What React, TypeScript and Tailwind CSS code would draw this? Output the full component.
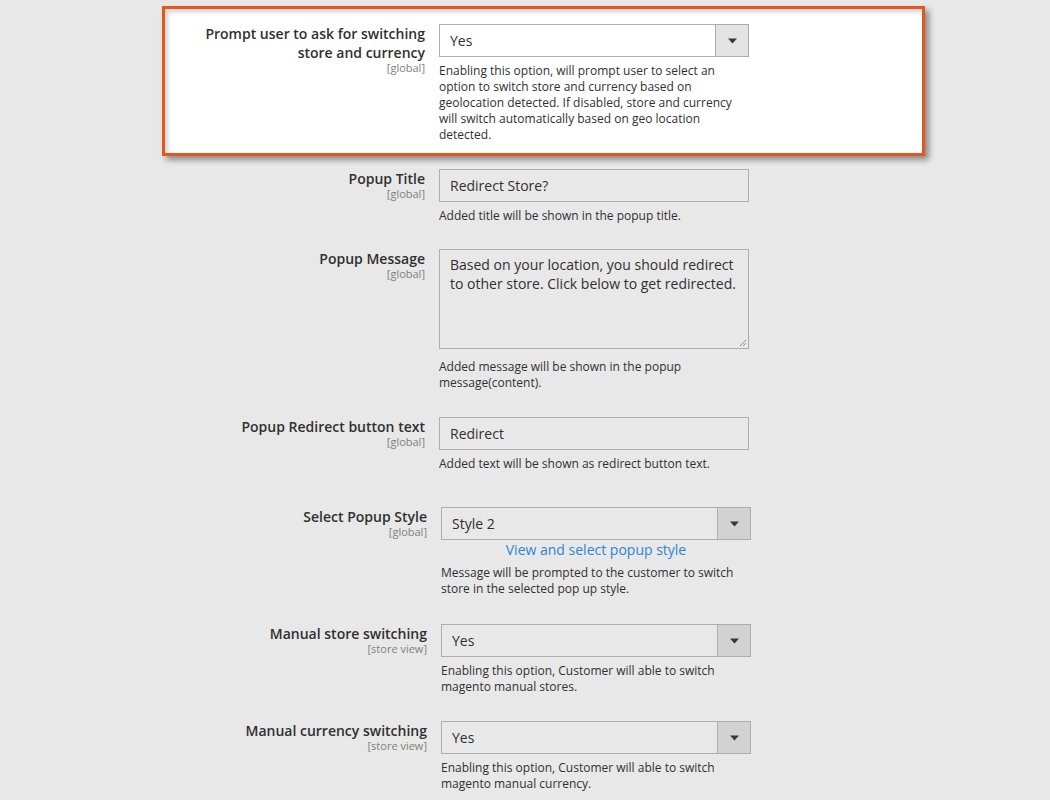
import React from "react";

const font = { fontFamily: '"Open Sans", "Noto Sans", sans-serif' };

function Arrow() {
  return (
    <svg width="9" height="6" viewBox="0 0 9 6" className="block">
      <path d="M0 0.5 L9 0.5 L4.5 5.5 Z" fill="#41362f" />
    </svg>
  );
}

function Select({ value, white }: { value: string; white?: boolean }) {
  return (
    <div
      className={`flex h-[33px] w-[310px] border border-[#adadad] ${white ? "bg-white" : "bg-[#e8e8e8]"}`}
    >
      <div className="flex flex-1 items-center pl-[10px] text-[14px] text-[#303030]">{value}</div>
      <div
        className={`flex w-[33px] items-center justify-center border-l border-[#adadad] ${white ? "bg-[#e3e3e3]" : "bg-[#d2d2d2]"}`}
      >
        <Arrow />
      </div>
    </div>
  );
}

function Input({ value }: { value: string }) {
  return (
    <div className="flex h-[33px] w-[310px] items-center border border-[#adadad] bg-[#e8e8e8] pl-[10px] text-[14px] text-[#303030]">
      {value}
    </div>
  );
}

function Label({ title, scope, width }: { title: React.ReactNode; scope: string; width: string }) {
  return (
    <div className={`${width} flex shrink-0 flex-col items-end text-right`}>
      <div className="text-[14px] font-semibold leading-[19px] text-[#303030]">{title}</div>
      <div className="text-[11px] leading-[12px] text-[#808080]">{scope}</div>
    </div>
  );
}

function Note({ children, mt = "mt-[6px]" }: { children: React.ReactNode; mt?: string }) {
  return <div className={`${mt} w-[300px] text-[12px] leading-[16px] text-[#303030]`}>{children}</div>;
}

export default function App() {
  return (
    <div className="min-h-[800px] w-[1050px] bg-[#e8e8e8] pt-[6px]" style={font}>
      <div className="ml-[162px] w-[763px]">
        {/* Highlighted card */}
        <div className="border-[3px] border-[#e4571b] bg-white pt-[15px] pb-[10px] shadow-[4px_4px_6px_rgba(0,0,0,0.4),inset_3px_3px_4px_rgba(0,0,0,0.18)]">
          <div className="flex gap-[14px]">
            <Label
              width="w-[260px]"
              title={
                <>
                  Prompt user to ask for switching
                  <br />
                  store and currency
                </>
              }
              scope="[global]"
            />
            <div>
              <Select value="Yes" white />
              <Note>
                Enabling this option, will prompt user to select an option to switch store and currency based on
                geolocation detected. If disabled, store and currency will switch automatically based on geo location
                detected.
              </Note>
            </div>
          </div>
        </div>

        <div className="px-[3px]">
          {/* Popup Title */}
          <div className="mt-[13px] flex gap-[14px]">
            <Label width="w-[260px]" title="Popup Title" scope="[global]" />
            <div>
              <Input value="Redirect Store?" />
              <Note>Added title will be shown in the popup title.</Note>
            </div>
          </div>

          {/* Popup Message */}
          <div className="mt-[25px] flex gap-[14px]">
            <Label width="w-[260px]" title="Popup Message" scope="[global]" />
            <div>
              <div className="relative h-[100px] w-[310px] border border-[#adadad] bg-[#e8e8e8] px-[10px] pt-[5px] text-[14px] leading-[19px] text-[#303030]">
                Based on your location, you should redirect to other store. Click below to get redirected.
                <svg width="8" height="8" viewBox="0 0 8 8" className="absolute right-[1px] bottom-[1px]">
                  <path d="M7 1 L1 7 M7 4 L4 7" stroke="#909090" strokeWidth="1" />
                </svg>
              </div>
              <Note mt="mt-[10px]">Added message will be shown in the popup message(content).</Note>
            </div>
          </div>

          {/* Popup Redirect button text */}
          <div className="mt-[26px] flex gap-[14px]">
            <Label width="w-[260px]" title="Popup Redirect button text" scope="[global]" />
            <div>
              <Input value="Redirect" />
              <Note>Added text will be shown as redirect button text.</Note>
            </div>
          </div>

          {/* Select Popup Style */}
          <div className="mt-[35px] flex gap-[14px]">
            <Label width="w-[262px]" title="Select Popup Style" scope="[global]" />
            <div>
              <Select value="Style 2" />
              <div className="w-[310px] text-center text-[14px] leading-[19px] text-[#2e84d6]">
                View and select popup style
              </div>
              <Note>Message will be prompted to the customer to switch store in the selected pop up style.</Note>
            </div>
          </div>

          {/* Manual store switching */}
          <div className="mt-[27px] flex gap-[14px]">
            <Label width="w-[262px]" title="Manual store switching" scope="[store view]" />
            <div>
              <Select value="Yes" />
              <Note>Enabling this option, Customer will able to switch magento manual stores.</Note>
            </div>
          </div>

          {/* Manual currency switching */}
          <div className="mt-[26px] flex gap-[14px]">
            <Label width="w-[262px]" title="Manual currency switching" scope="[store view]" />
            <div>
              <Select value="Yes" />
              <Note>Enabling this option, Customer will able to switch magento manual currency.</Note>
            </div>
          </div>
        </div>
      </div>
    </div>
  );
}
